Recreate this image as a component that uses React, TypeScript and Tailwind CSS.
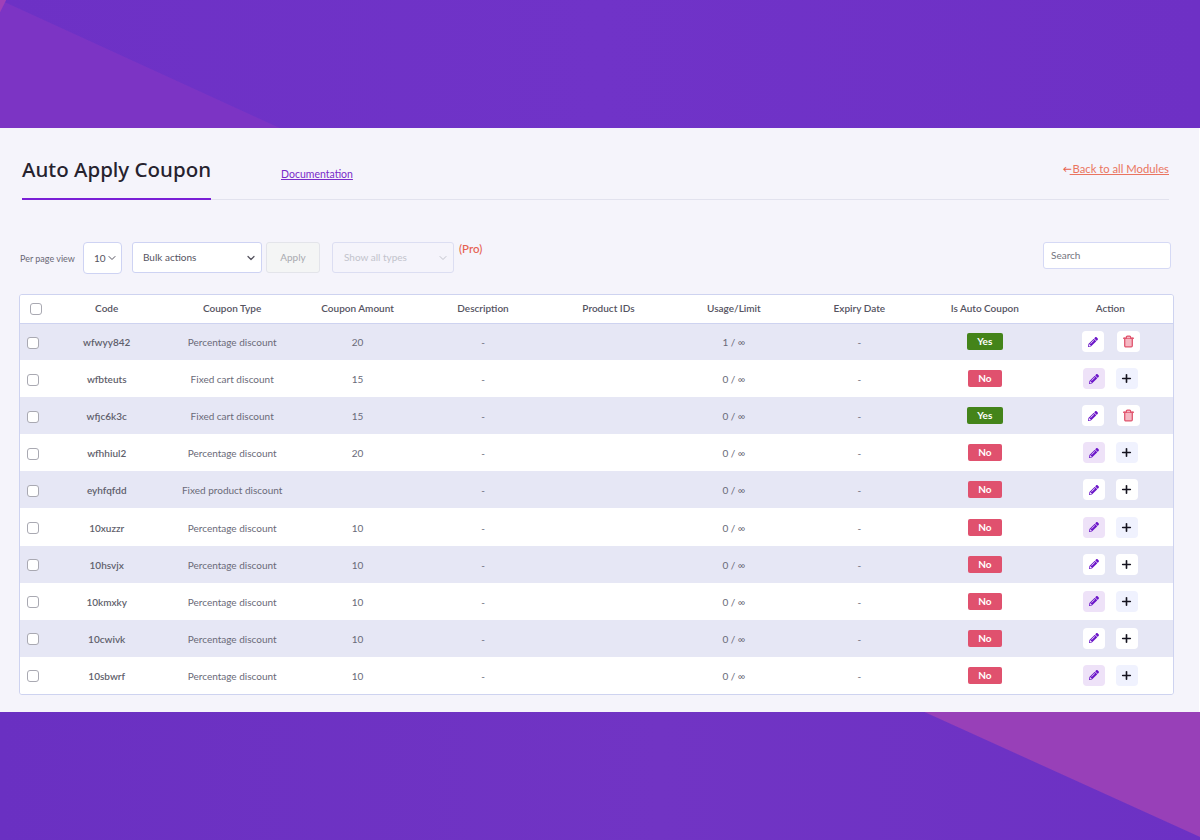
import { ChevronDown, Plus, Trash2 } from 'lucide-react';
import { FaPencilAlt } from 'react-icons/fa';

const rows = [
  { code: 'wfwyy842', type: 'Percentage discount', amount: '20', usage: '1 / ∞', auto: true },
  { code: 'wfbteuts', type: 'Fixed cart discount', amount: '15', usage: '0 / ∞', auto: false },
  { code: 'wfjc6k3c', type: 'Fixed cart discount', amount: '15', usage: '0 / ∞', auto: true },
  { code: 'wfhhiul2', type: 'Percentage discount', amount: '20', usage: '0 / ∞', auto: false },
  { code: 'eyhfqfdd', type: 'Fixed product discount', amount: '', usage: '0 / ∞', auto: false },
  { code: '10xuzzr', type: 'Percentage discount', amount: '10', usage: '0 / ∞', auto: false },
  { code: '10hsvjx', type: 'Percentage discount', amount: '10', usage: '0 / ∞', auto: false },
  { code: '10kmxky', type: 'Percentage discount', amount: '10', usage: '0 / ∞', auto: false },
  { code: '10cwivk', type: 'Percentage discount', amount: '10', usage: '0 / ∞', auto: false },
  { code: '10sbwrf', type: 'Percentage discount', amount: '10', usage: '0 / ∞', auto: false },
];

const headers = ['Code', 'Coupon Type', 'Coupon Amount', 'Description', 'Product IDs', 'Usage/Limit', 'Expiry Date', 'Is Auto Coupon', 'Action'];

function Check() {
  return <input type="checkbox" className="block appearance-none w-[12px] h-[12px] rounded-[3px] border border-[#a9a9b2] bg-white" />;
}

function Row({ row, shaded }: { row: (typeof rows)[number]; shaded: boolean }) {
  return (
    <tr className={`h-[37.1px] text-[10px] text-[#6a6a78] text-center ${shaded ? 'bg-[#e6e7f5]' : 'bg-white'}`}>
      <td className="pl-[7px] pt-[2px]"><Check /></td>
      <td className="pt-[2px] font-semibold text-[#5f5f6c]">{row.code}</td>
      <td className="pt-[2px]">{row.type}</td>
      <td className="pt-[2px]">{row.amount}</td>
      <td className="pt-[2px]">-</td>
      <td></td>
      <td className="pt-[2px]">{row.usage}</td>
      <td className="pt-[2px]">-</td>
      <td>
        {row.auto ? (
          <span className="inline-block w-[36px] h-[17px] leading-[17px] rounded-[2px] bg-[#44841a] text-white font-bold">Yes</span>
        ) : (
          <span className="inline-block w-[34px] h-[17px] leading-[17px] rounded-[2px] bg-[#e0516e] text-white font-bold">No</span>
        )}
      </td>
      <td>
        <div className={`flex justify-center ${row.auto ? 'gap-[13px] pl-[2px]' : 'gap-[11px]'}`}>
          <span className={`flex items-center justify-center w-[22px] h-[21px] rounded-[4px] ${shaded ? 'bg-white' : 'bg-[#eee2f8]'}`}>
            <FaPencilAlt className="w-[10px] h-[10px] text-[#6a14c8]" />
          </span>
          {row.auto ? (
            <span className="flex items-center justify-center w-[23px] h-[21px] rounded-[4px] bg-white">
              <Trash2 className="w-[13px] h-[13px] text-[#e0566f] fill-[#f5b8c3]" strokeWidth={2.4} />
            </span>
          ) : (
            <span className={`flex items-center justify-center w-[22px] h-[21px] rounded-[4px] ${shaded ? 'bg-white' : 'bg-[#f0f2fe]'}`}>
              <Plus className="w-[13px] h-[13px] text-[#15131f]" strokeWidth={3} />
            </span>
          )}
        </div>
      </td>
    </tr>
  );
}

export default function App() {
  return (
    <div className="w-[1200px] h-[840px] overflow-hidden flex flex-col font-['Lato','Open_Sans',sans-serif]">
      <div className="h-[128px] bg-[linear-gradient(116.6deg,#a040b8_5px,transparent_6px),linear-gradient(204.6deg,transparent_499px,#7c34c4_500px),linear-gradient(90deg,#6d31c5,#7033c8_50%,#6e30c5)]"></div>

      <div className="h-[584px] w-[1199px] bg-[#f5f4fb] px-[20px] mr-[1px]">
        <div className="flex items-start justify-between ml-[2px] mr-[10px] mt-[27px] h-[45px] border-b border-[#e2e2ee]">
          <div className="flex items-start">
            <h1 className="h-[46px] -mt-[1px] border-b-2 border-[#7a1fd6] font-['Noto_Sans',sans-serif] text-[20.5px] leading-[30px] font-medium text-[#26222e]">Auto Apply Coupon</h1>
            <a className="ml-[70px] mt-[11px] text-[10.5px] leading-[16px] underline text-[#7a2bc9]">Documentation</a>
          </div>
          <div className="mt-[6px] flex text-[11.25px] leading-[16px] text-[#ea7460]">
            <span className="w-[7px] font-bold text-[9px] text-[#e8604c]">←</span>
            <a className="underline whitespace-pre"> Back to all Modules</a>
          </div>
        </div>

        <div className="flex items-start mt-[42px] h-[31px] text-[10px] text-[#55535f]">
          <span className="mt-[10px] w-[63px] text-[9px] text-[#6a6875]">Per page view</span>
          <div className="flex items-center justify-between w-[39px] h-[32px] pl-[10px] pr-[3px] border border-[#ced3f3] rounded-[4px] bg-white">
            10<ChevronDown className="w-[12px] h-[12px]" />
          </div>
          <div className="flex items-center justify-between ml-[10px] w-[130px] h-[31px] pl-[10px] pr-[4px] border border-[#ced3f3] rounded-[3px] bg-white">
            Bulk actions<ChevronDown className="w-[12px] h-[12px]" strokeWidth={2.5} />
          </div>
          <div className="flex items-center justify-center ml-[4px] w-[54px] h-[31px] border border-[#e3e4ea] rounded-[3px] bg-[#f4f5f5] text-[#a9aab0]">Apply</div>
          <div className="flex items-center justify-between ml-[12px] w-[122px] h-[31px] pl-[11px] pr-[4px] border border-[#dcdef2] rounded-[3px] text-[#c2c3cc]">
            Show all types<ChevronDown className="w-[12px] h-[12px]" />
          </div>
          <span className="ml-[5px] -mt-[1px] text-[11.5px] font-medium leading-[16px] text-[#e6604f]">(Pro)</span>
          <input placeholder="Search" className="ml-auto mr-[8px] w-[128px] h-[27px] -mt-[0.5px] pl-[7px] border border-[#d5d9f5] rounded-[3px] bg-white text-[10px] placeholder:text-[#74747e] outline-none" />
        </div>

        <div className="mt-[21px] -ml-[1px] w-[1155px] rounded-[3px] border border-[#ced3f0] overflow-hidden">
          <table className="w-full table-fixed border-collapse">
            <colgroup>
              <col className="w-[24px]" />
              <col span={9} />
            </colgroup>
            <thead>
              <tr className="h-[28px] bg-white border-b border-[#ced3f0] text-[10px] text-[#55535f]">
                <th className="pl-[10px]"><Check /></th>
                {headers.map((h) => (
                  <th key={h} className="font-semibold text-center">{h}</th>
                ))}
              </tr>
            </thead>
            <tbody>
              {rows.map((row, i) => (
                <Row key={row.code} row={row} shaded={i % 2 === 0} />
              ))}
            </tbody>
          </table>
        </div>
      </div>

      <div className="h-[128px] bg-[linear-gradient(24.4deg,transparent_498px,#9840b8_499px),linear-gradient(90deg,#6a30c2,#7134c4_55%,#6c31c4)]"></div>
    </div>
  );
}
